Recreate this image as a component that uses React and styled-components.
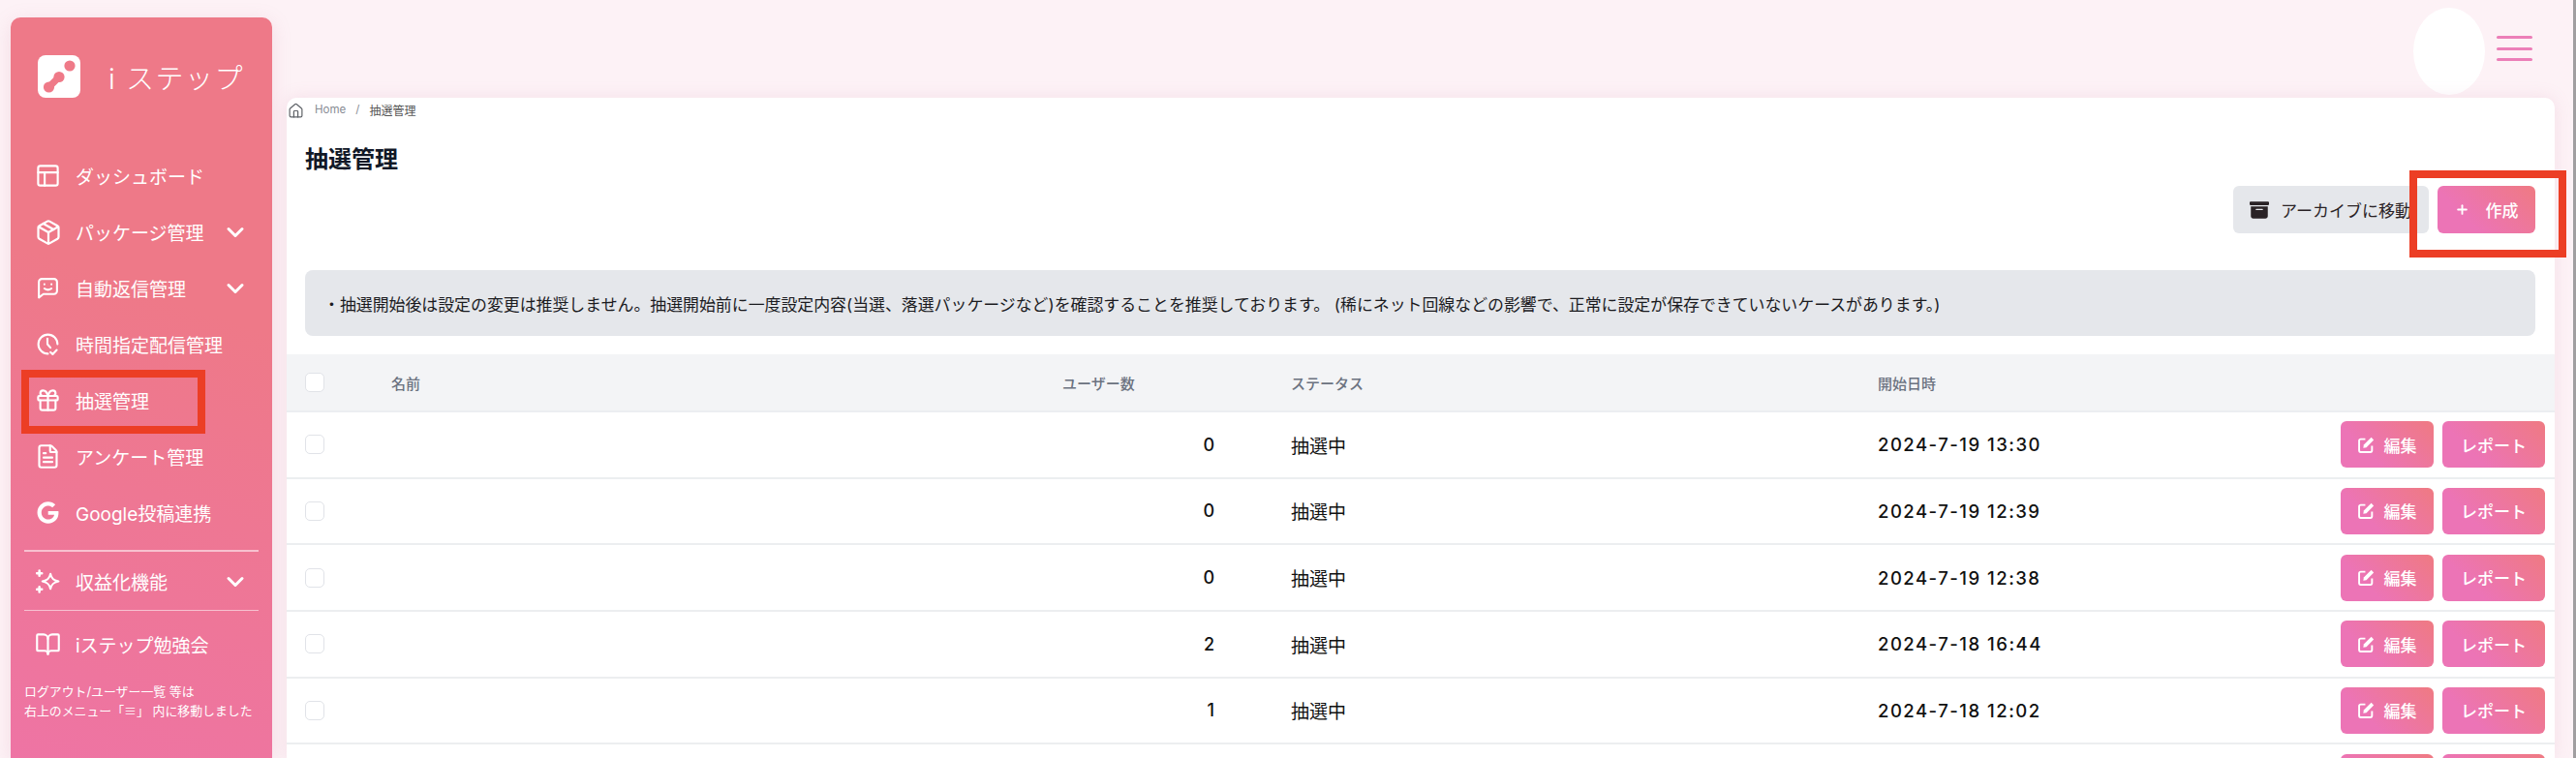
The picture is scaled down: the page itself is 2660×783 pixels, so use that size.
import React from "react";
import styled, { createGlobalStyle } from "styled-components";
import { PanelsTopLeft, Package, Gift, FileText, BookOpen, House, ChevronDown, Plus } from "lucide-react";
import { FaGoogle } from "react-icons/fa";
import { FaBoxArchive } from "react-icons/fa6";

const FONT = `"Inter", "Noto Sans CJK JP", sans-serif`;
const COLS = "89px 693px 236px 606px 1fr auto";

const Global = createGlobalStyle`
  html, body { margin: 0; padding: 0; background: #fdf2f6; }
  * { box-sizing: border-box; }
  body { font-family: ${FONT}; }
`;

const Page = styled.div`
  position: relative;
  width: 2660px;
  height: 783px;
  overflow: hidden;
  display: flex;
  background: #fdf2f6;
`;
const Sidebar = styled.aside`
  flex: none;
  width: 270px;
  height: 765px;
  margin: 18px 0 0 11px;
  padding-top: 39px;
  border-radius: 10px 10px 0 0;
  background: linear-gradient(20deg, #ee74a4 0%, #ee7988 62%);
  box-shadow: 0 4px 20px rgba(200, 120, 150, 0.18);
  color: #fff;
`;
const Brand = styled.div`
  display: flex;
  align-items: center;
  height: 44px;
  padding-left: 28px;
`;
const BrandName = styled.span`
  margin-left: 29px;
  font-size: 29px;
  font-weight: 300;
  letter-spacing: 1.5px;
  white-space: pre;
`;
const Nav = styled.nav`
  margin-top: 52px;
`;
const Item = styled.div`
  display: flex;
  align-items: center;
  height: 57.9px;
  padding-left: 26px;
  padding-right: 24px;
  font-size: 19px;
  white-space: nowrap;
  svg { flex: none; }
`;
const ItemIcon = styled.span`
  display: flex;
  width: 25px;
  height: 25px;
  margin-right: 16px;
  justify-content: center;
  align-items: center;
`;
const Chevron = styled(ChevronDown)`
  margin-left: auto;
`;
const Rule = styled.hr`
  margin: ${(p) => p.$m};
  border: 0;
  height: ${(p) => p.$h}px;
  background: rgba(255, 255, 255, 0.55);
`;
const Note = styled.p`
  margin: 10px 0 0 14px;
  font-size: 12.9px;
  line-height: 20px;
  white-space: pre;
`;
const Column = styled.main`
  flex: none;
  width: 2342px;
  margin-left: 15px;
  display: flex;
  flex-direction: column;
`;
const TopBar = styled.header`
  height: 101px;
  flex: none;
  display: flex;
  justify-content: flex-end;
  padding: 8px 23px 3px 0;
`;
const Avatar = styled.div`
  width: 74px;
  height: 90px;
  border-radius: 50%;
  background: #fff;
`;
const Burger = styled.div`
  width: 37px;
  margin-left: 12px;
  padding-top: 29px;
  display: flex;
  flex-direction: column;
  gap: 8.5px;
`;
const BurgerBar = styled.span`
  height: 3px;
  border-radius: 2px;
  background: #ec7fb8;
`;
const Card = styled.section`
  flex: 1;
  border-radius: 10px 10px 0 0;
  background: #fff;
  box-shadow: 0 0 18px rgba(200, 130, 160, 0.16);
  overflow: hidden;
`;
const Crumbs = styled.div`
  height: 24px;
  padding-left: 1px;
  display: flex;
  align-items: center;
  font-size: 11.5px;
  color: #888c94;
`;
const HomeIcon = styled(House)`
  color: #5f6368;
  margin-right: 11px;
  margin-top: 2px;
`;
const Slash = styled.span`
  margin: 0 10px;
`;
const CrumbNow = styled.span`
  color: #555;
  font-size: 12px;
`;
const Title = styled.h1`
  margin: 20px 0 0 19px;
  font-size: 24px;
  line-height: 40px;
  font-weight: 700;
  color: #111827;
`;
const Toolbar = styled.div`
  margin-top: 7px;
  padding-right: 20px;
  display: flex;
  justify-content: flex-end;
  gap: 9px;
`;
const ArchiveButton = styled.div`
  width: 202px;
  height: 49px;
  padding-left: 17px;
  display: flex;
  align-items: center;
  gap: 12px;
  border-radius: 6px;
  background: #e5e7eb;
  color: #2a2326;
  font-size: 17px;
  white-space: nowrap;
`;
const PinkButton = styled.div`
  height: ${(p) => p.$h}px;
  width: ${(p) => p.$w}px;
  display: flex;
  align-items: center;
  justify-content: center;
  gap: ${(p) => p.$gap || 0}px;
  border-radius: 6px;
  background: linear-gradient(45deg, #ec74b6 30%, #ef7a82 100%);
  color: #fff;
  font-size: 17px;
  font-weight: 500;
  white-space: nowrap;
`;
const Notice = styled.div`
  height: 68px;
  margin: 38px 20px 0 19px;
  padding-left: 19px;
  display: flex;
  align-items: center;
  border-radius: 8px;
  background: #e5e7eb;
  color: #1b1b1f;
  font-size: 16.9px;
  white-space: pre;
`;
const Table = styled.div`
  margin-top: 19px;
`;
const HeaderRow = styled.div`
  display: grid;
  grid-template-columns: ${COLS};
  align-items: center;
  height: 60px;
  padding: 0 10px 0 19px;
  background: #f3f4f6;
  border-bottom: 2px solid #eceef1;
  color: #6b7280;
  font-size: 15px;
  font-weight: 500;
`;
const Row = styled.div`
  display: grid;
  grid-template-columns: ${COLS};
  align-items: center;
  height: 68.65px;
  padding: 0 10px 0 19px;
  border-bottom: 2px solid #eceef0;
  color: #111;
  font-size: 19px;
`;
const Check = styled.span`
  display: block;
  width: 20px;
  height: 20px;
  border: 1.5px solid #e1e3e8;
  border-radius: 5px;
  background: #fff;
`;
const Count = styled.div`
  padding-right: 79px;
  text-align: right;
  font-size: 18px;
  font-weight: 500;
`;
const DateCell = styled.div`
  font-size: 18.5px;
  font-weight: 500;
  letter-spacing: 1.5px;
`;
const Actions = styled.div`
  display: flex;
  gap: 9px;
`;
const EdgeBar = styled.div`
  position: absolute;
  top: 0;
  right: 0;
  width: 3px;
  height: 783px;
  background: #a09ea0;
`;
const Callout = styled.div`
  position: absolute;
  left: ${(p) => p.$x}px;
  top: ${(p) => p.$y}px;
  width: ${(p) => p.$w}px;
  height: ${(p) => p.$h}px;
  border: 8px solid #ec3e25;
  pointer-events: none;
`;

const Logo = () => (
  <svg width="44" height="44" viewBox="0 0 44 44">
    <rect width="44" height="44" rx="8" fill="#fff" />
    <circle cx="33" cy="11" r="5.6" fill="#ef7a88" />
    <circle cx="11.5" cy="33" r="5.6" fill="#ef7a88" />
    <circle cx="22" cy="22.5" r="5.6" fill="#ef7a88" />
    <path d="M11.5 33 22 22.5" stroke="#ef7a88" strokeWidth="7" />
  </svg>
);
const stroke = { fill: "none", stroke: "currentColor", strokeWidth: 2, strokeLinecap: "round", strokeLinejoin: "round" };
const MessageSmile = () => (
  <svg width="25" height="25" viewBox="0 0 24 24" {...stroke}>
    <path d="M3 21.5V6a3 3 0 0 1 3-3h12a3 3 0 0 1 3 3v9a3 3 0 0 1-3 3H7.5z" />
    <path d="M8.5 8.3v.1M15.5 8.3v.1M8.5 12.5c2 1.5 5 1.5 7 0" />
  </svg>
);
const ClockCheck = () => (
  <svg width="25" height="25" viewBox="0 0 24 24" {...stroke}>
    <path d="M21.5 12a9.5 9.5 0 1 0-9.5 9.5" />
    <path d="M11.5 6.5V12l3 3.5" />
    <path d="M14.5 20l2.2 2 4-4.2" />
  </svg>
);
const Sparkle = () => (
  <svg width="25" height="25" viewBox="0 0 24 24" {...stroke}>
    <path d="M14.5 4.5c.9 4.6 2.8 6.5 8 7.5-5.2 1-7.1 2.9-8 7.5-.9-4.6-2.8-6.5-8-7.5 5.2-1 7.1-2.9 8-7.5z" />
    <path d="M3.5 1.5v5M1 4h5M3.5 17.5v5M1 20h5" strokeWidth="2.4" />
  </svg>
);
const EditIcon = () => (
  <svg width="17" height="17" viewBox="0 0 16 16">
    <path d="M7 2.5H2.5A1.5 1.5 0 0 0 1 4v9.5A1.500 1.500 0 0 0 2.500 15H12a1.500 1.500 0 0 0 1.500-1.500V9" fill="none" stroke="#fff" strokeWidth="1.8" />
    <path d="M12.800.8 15.200 3.200 8 10.500 5 11l.5-3z" fill="#fff" />
  </svg>
);

const rows = [
  ["0", "抽選中", "2024-7-19 13:30", "編集", "レポート"],
  ["0", "抽選中", "2024-7-19 12:39", "編集", "レポート"],
  ["0", "抽選中", "2024-7-19 12:38", "編集", "レポート"],
  ["2", "抽選中", "2024-7-18 16:44", "編集", "レポート"],
  ["1", "抽選中", "2024-7-18 12:02", "編集", "レポート"],
  ["", "", "", "", ""],
];

const NavRow = ({ icon, label, more }) => (
  <Item>
    <ItemIcon>{icon}</ItemIcon>
    {label}
    {more && <Chevron size={28} strokeWidth={2.6} />}
  </Item>
);

export default function App() {
  return (
    <Page>
      <Global />
      <Sidebar>
        <Brand>
          <Logo />
          <BrandName>i ステップ</BrandName>
        </Brand>
        <Nav>
          <NavRow icon={<PanelsTopLeft size={27} strokeWidth={1.9} />} label="ダッシュボード" />
          <NavRow icon={<Package size={28} strokeWidth={1.9} />} label="パッケージ管理" more />
          <NavRow icon={<MessageSmile />} label="自動返信管理" more />
          <NavRow icon={<ClockCheck />} label="時間指定配信管理" />
          <NavRow icon={<Gift size={27} strokeWidth={1.9} />} label="抽選管理" />
          <NavRow icon={<FileText size={27} strokeWidth={1.9} />} label="アンケート管理" />
          <NavRow icon={<FaGoogle size={23} />} label="Google投稿連携" />
          <Rule $m="10px 14px 1.5px" $h={2} />
          <NavRow icon={<Sparkle />} label="収益化機能" more />
          <Rule $m="0 14px 6px" $h={1} />
          <NavRow icon={<BookOpen size={27} strokeWidth={1.9} />} label="iステップ勉強会" />
        </Nav>
        <Note>{"ログアウト/ユーザー一覧 等は\n右上のメニュー「≡」 内に移動しました"}</Note>
      </Sidebar>
      <Column>
        <TopBar>
          <Avatar />
          <Burger>
            <BurgerBar />
            <BurgerBar />
            <BurgerBar />
          </Burger>
        </TopBar>
        <Card>
          <Crumbs>
            <HomeIcon size={17} strokeWidth={1.7} />
            Home
            <Slash>/</Slash>
            <CrumbNow>抽選管理</CrumbNow>
          </Crumbs>
          <Title>抽選管理</Title>
          <Toolbar>
            <ArchiveButton>
              <FaBoxArchive size={20} />
              アーカイブに移動
            </ArchiveButton>
            <PinkButton $w={101} $h={49} $gap={17}>
              <Plus size={15} strokeWidth={3} />
              作成
            </PinkButton>
          </Toolbar>
          <Notice>
            {"・抽選開始後は設定の変更は推奨しません。抽選開始前に一度設定内容(当選、落選パッケージなど)を確認することを推奨しております。 (稀にネット回線などの影響で、正常に設定が保存できていないケースがあります。)"}
          </Notice>
          <Table>
            <HeaderRow>
              <Check />
              <div>名前</div>
              <div>ユーザー数</div>
              <div>ステータス</div>
              <div>開始日時</div>
              <div />
            </HeaderRow>
            {rows.map(([count, status, date, edit, report], i) => (
              <Row key={i}>
                <Check />
                <div />
                <Count>{count}</Count>
                <div>{status}</div>
                <DateCell>{date}</DateCell>
                <Actions>
                  <PinkButton $w={96} $h={48} $gap={10}>
                    {edit && <EditIcon />}
                    {edit}
                  </PinkButton>
                  <PinkButton $w={106} $h={48}>{report}</PinkButton>
                </Actions>
              </Row>
            ))}
          </Table>
        </Card>
      </Column>
      <EdgeBar />
      <Callout $x={22} $y={382} $w={190} $h={66} />
      <Callout $x={2488} $y={176} $w={162} $h={90} />
    </Page>
  );
}
